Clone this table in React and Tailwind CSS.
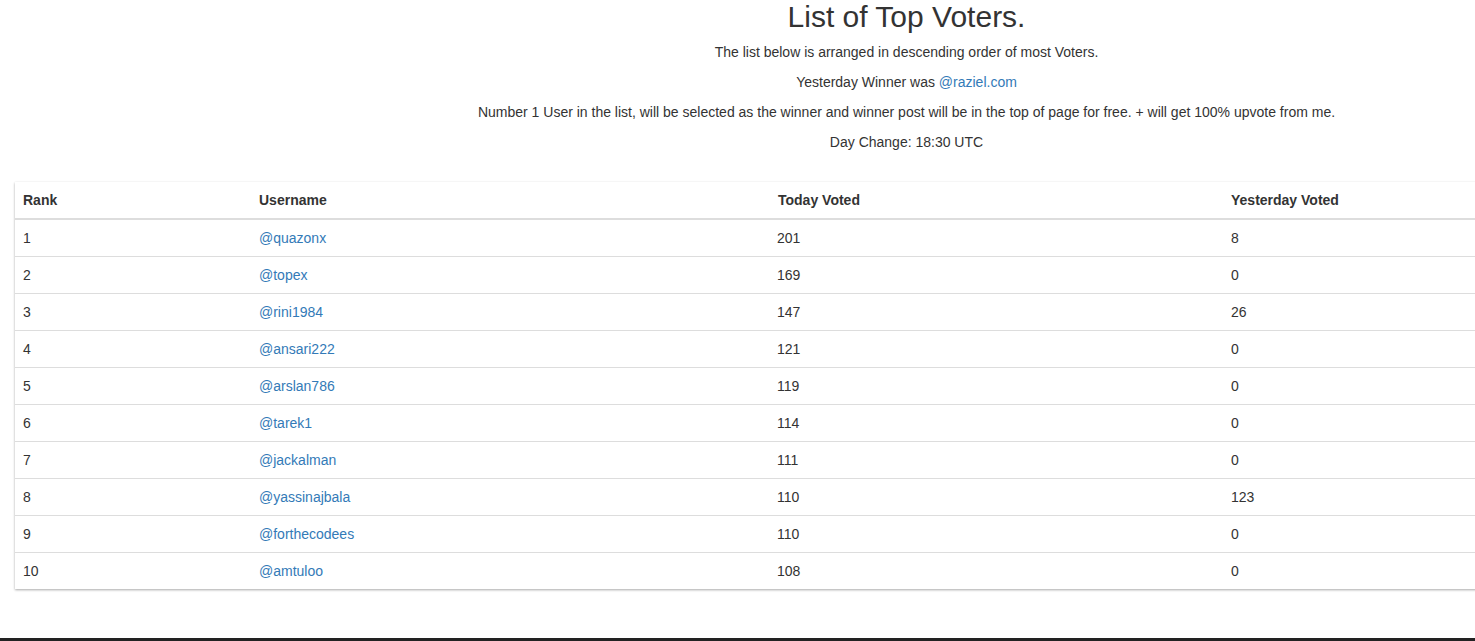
import React from "react";

const rows = [
  [1, "@quazonx", 201, 8],
  [2, "@topex", 169, 0],
  [3, "@rini1984", 147, 26],
  [4, "@ansari222", 121, 0],
  [5, "@arslan786", 119, 0],
  [6, "@tarek1", 114, 0],
  [7, "@jackalman", 111, 0],
  [8, "@yassinajbala", 110, 123],
  [9, "@forthecodees", 110, 0],
  [10, "@amtuloo", 108, 0],
];

export default function App() {
  return (
    <div className="h-[641px] w-full overflow-hidden bg-white text-[14px] leading-[20px] text-[#333]" style={{ fontFamily: '"Liberation Sans", Arial, Helvetica, sans-serif' }}>
      <div className="w-[1813px] px-[15px]">
        <div className="text-center">
          <h2 className="m-0 mb-[9px] text-[30px] leading-[33px] font-normal text-[#333]">List of Top Voters.</h2>
          <p className="mb-[10px]">The list below is arranged in descending order of most Voters.</p>
          <p className="mb-[10px]">
            Yesterday Winner was <a className="text-[#337ab7]" href="#">@raziel.com</a>
          </p>
          <p className="mb-[10px]">
            Number 1 User in the list, will be selected as the winner and winner post will be in the top of page for free. + will get 100% upvote from me.
          </p>
          <p className="mb-[10px]">Day Change: 18:30 UTC</p>
        </div>
        <div className="mt-[30px] bg-white shadow-[0_1px_3px_rgba(0,0,0,0.12),0_1px_2px_rgba(0,0,0,0.24)]">
          <table className="w-full border-collapse text-left">
            <thead>
              <tr>
                <th className="w-[236px] border-b-2 border-[#ddd] px-2 py-2 font-bold">Rank</th>
                <th className="w-[519px] border-b-2 border-[#ddd] px-2 py-2 font-bold">Username</th>
                <th className="w-[453px] border-b-2 border-[#ddd] px-2 py-2 font-bold">Today Voted</th>
                <th className="border-b-2 border-[#ddd] px-2 py-2 font-bold">Yesterday Voted</th>
              </tr>
            </thead>
            <tbody>
              {rows.map((r, i) => (
                <tr key={r[0]}>
                  <td className={(i > 0 ? "border-t border-[#ddd] " : "") + "px-2 py-2"}>{r[0]}</td>
                  <td className={(i > 0 ? "border-t border-[#ddd] " : "") + "px-2 py-2"}>
                    <a className="text-[#337ab7]" href="#">{r[1]}</a>
                  </td>
                  <td className={(i > 0 ? "border-t border-[#ddd] " : "") + "px-2 py-2 pl-[7px]"}>{r[2]}</td>
                  <td className={(i > 0 ? "border-t border-[#ddd] " : "") + "px-2 py-2"}>{r[3]}</td>
                </tr>
              ))}
            </tbody>
          </table>
        </div>
      </div>
      <div className="mt-[49px] h-[10px] w-full bg-[#222]"></div>
    </div>
  );
}
